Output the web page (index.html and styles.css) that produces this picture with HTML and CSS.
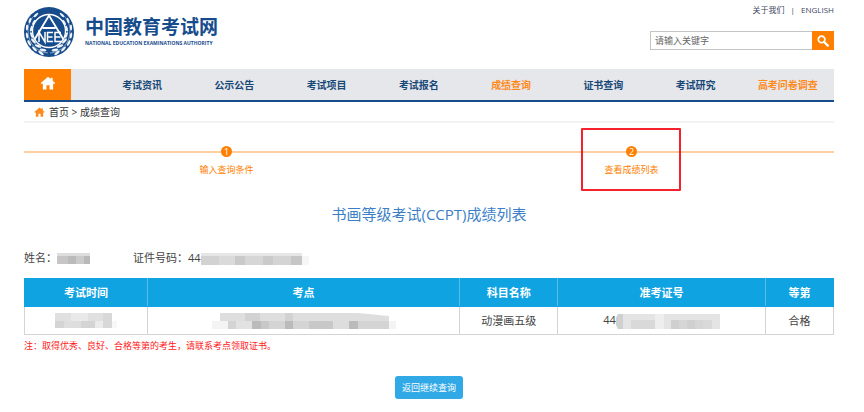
FILE: index.html
```html
<!DOCTYPE html>
<html lang="zh-CN">
<head>
<meta charset="utf-8">
<meta name="viewport" content="width=device-width, initial-scale=1">
<title>中国教育考试网 - 成绩查询</title>
<link rel="stylesheet" href="styles.css">
</head>
<body>
<svg class="defs" aria-hidden="true">
  <defs>
    <path id="house" d="M8 0.8 L0.3 7.6 L1.4 8.8 L2.5 7.9 V14.5 H6.4 V10 H9.6 V14.5 H13.5 V7.9 L14.6 8.8 L15.7 7.6 L13 5.2 V1.8 H10.8 V3.3 Z"/>
    <g id="branch">
      <path d="M24 46 C12 45 4 36 4 24 C4 17 7 11 12 7" fill="none" stroke="#cfdcec" stroke-width="0.6"/>
      <g fill="#eef3f9">
        <ellipse cx="19" cy="43" rx="3.4" ry="1.3" transform="rotate(8 19 43)"/>
        <ellipse cx="17" cy="46" rx="3.2" ry="1.2" transform="rotate(38 17 46)"/>
        <ellipse cx="14" cy="39" rx="3.4" ry="1.3" transform="rotate(20 14 39)"/>
        <ellipse cx="10.5" cy="42" rx="3.2" ry="1.2" transform="rotate(48 10.5 42)"/>
        <ellipse cx="9.5" cy="34" rx="3.2" ry="1.3" transform="rotate(50 9.5 34)"/>
        <ellipse cx="5.2" cy="36" rx="3.2" ry="1.2" transform="rotate(62 5.2 36)"/>
        <ellipse cx="7.6" cy="28" rx="3.1" ry="1.2" transform="rotate(72 7.6 28)"/>
        <ellipse cx="3" cy="28.5" rx="3.1" ry="1.1" transform="rotate(80 3 28.5)"/>
        <ellipse cx="7.4" cy="21.5" rx="3.1" ry="1.2" transform="rotate(105 7.4 21.5)"/>
        <ellipse cx="3" cy="20.5" rx="3" ry="1.1" transform="rotate(92 3 20.5)"/>
        <ellipse cx="10" cy="15.5" rx="3" ry="1.2" transform="rotate(122 10 15.5)"/>
        <ellipse cx="6" cy="13.5" rx="3" ry="1.1" transform="rotate(110 6 13.5)"/>
        <ellipse cx="12" cy="8" rx="3" ry="1.1" transform="rotate(135 12 8)"/>
      </g>
    </g>
  </defs>
</svg>

<div class="page">
  <header class="header">
    <a class="brand" href="#">
      <svg class="emblem" viewBox="0 0 50 50" role="img" aria-label="NEEA">
        <circle cx="25" cy="25" r="25" fill="#174c8c"/>
        <use href="#branch"/>
        <use href="#branch" transform="translate(50 0) scale(-1 1)"/>
        <circle cx="25" cy="24" r="16.5" fill="#174c8c" stroke="#fff" stroke-width="1.3"/>
        <path d="M10.5 32.5 L25 8.5 L39.5 32.5 M18.5 21 H31.5" fill="none" stroke="#fff" stroke-width="1.8"/>
        <path d="M15 35 V25 L21 35 V25 M29 25.6 H23.5 V34.4 H29 M23.5 30 H28.5 M37 25.6 H31 V34.4 H38 M31 30 H36.5" fill="none" stroke="#fff" stroke-width="1.5"/>
      </svg>
      <span class="brand-text">
        <span class="brand-name">中国教育考试网</span>
        <span class="brand-sub">NATIONAL EDUCATION EXAMINATIONS AUTHORITY</span>
      </span>
    </a>
    <div class="tools">
      <div class="links"><a href="#">关于我们</a><span>|</span><a href="#">ENGLISH</a></div>
      <form class="search">
        <input type="text" aria-label="关键字" placeholder="请输入关键字">
        <button type="button" aria-label="搜索">
          <svg viewBox="0 0 12 12" aria-hidden="true"><circle cx="4.6" cy="4.4" r="3.3" fill="none" stroke="#fff" stroke-width="1.7"/><path d="M7.2 7 L10.8 10.6" stroke="#fff" stroke-width="2.3" stroke-linecap="round"/></svg>
        </button>
      </form>
    </div>
  </header>

  <nav class="nav">
    <a class="home" href="#" aria-label="首页"><svg viewBox="0 0 16 15" aria-hidden="true"><use href="#house"/></svg></a>
    <div class="menu">
      <a href="#">考试资讯</a>
      <a href="#">公示公告</a>
      <a href="#">考试项目</a>
      <a href="#">考试报名</a>
      <a class="hot" href="#">成绩查询</a>
      <a href="#">证书查询</a>
      <a href="#">考试研究</a>
      <a class="hot" href="#">高考问卷调查</a>
    </div>
  </nav>

  <div class="crumbs">
    <svg viewBox="0 0 16 15" aria-hidden="true"><use href="#house"/></svg>
    <span><a href="#">首页</a> &gt; <a href="#">成绩查询</a></span>
  </div>

  <main>
    <ol class="steps">
      <li><span class="num">1</span><span>输入查询条件</span></li>
      <li class="marked"><span class="num">2</span><span>查看成绩列表</span></li>
    </ol>

    <h1>书画等级考试(CCPT)成绩列表</h1>

    <div class="person">
      <div class="who">姓名：<svg class="mask mask-name" viewBox="0 0 33 12" aria-hidden="true">
        <path fill="#dedede" d="M0 1H33V4H0z"/><path fill="#c6c6c6" d="M0 4H11V12H0z"/><path fill="#bbb" d="M11 4H19V12H11z"/><path fill="#cbcbcb" d="M19 4H27V12H19z"/><path fill="#b9b9b9" d="M27 4H33V12H27z"/></svg></div>
      <div class="who">证件号码：44<svg class="mask mask-id" viewBox="0 0 108 13" aria-hidden="true">
        <path fill="#e6e6e6" d="M0 1H101V4H0z"/><path fill="#d2d2d2" d="M0 4H18V13H0z"/><path fill="#dadada" d="M18 4H34V13H18z"/><path fill="#c9c9c9" d="M34 4H44V13H34z"/><path fill="#d6d6d6" d="M44 4H62V13H44z"/><path fill="#cacaca" d="M62 4H72V13H62z"/><path fill="#d4d4d4" d="M72 4H90V13H72z"/><path fill="#c6c6c6" d="M90 4H101V13H90z"/><path fill="#f6f6f6" d="M101 4H108V13H101z"/></svg></div>
    </div>

    <table>
      <colgroup><col class="c-time"><col class="c-site"><col class="c-subject"><col class="c-ticket"><col class="c-grade"></colgroup>
      <thead>
        <tr><th scope="col">考试时间</th><th scope="col">考点</th><th scope="col">科目名称</th><th scope="col">准考证号</th><th scope="col">等第</th></tr>
      </thead>
      <tbody>
        <tr>
          <td><svg class="mask mask-time" viewBox="0 0 62 16" aria-hidden="true">
            <path fill="#e0e0e0" d="M0 0H57V8H0z"/><path fill="#e9e9e9" d="M16 0H33V8H16z"/><path fill="#d4d4d4" d="M0 8H9V15H0zM26 8H40V15H26z"/><path fill="#dedede" d="M9 8H26V15H9z"/><path fill="#ebebeb" d="M40 8H48V15H40z"/><path fill="#d8d8d8" d="M48 0H57V15H48z"/><path fill="#f8f8f8" d="M57 8H62V15H57z"/></svg></td>
          <td><svg class="mask mask-site" viewBox="0 0 184 16" aria-hidden="true">
            <path fill="#dedede" d="M8 0H146L177 3V8H8z"/><path fill="#d2d2d2" d="M33 0H48V8H33zM73 0H81V8H73z"/><path fill="#f4f4f4" d="M0 8H16V16H0zM177 8H184V16H177z"/><path fill="#d4d4d4" d="M16 8H177V16H16z"/><path fill="#e2e2e2" d="M24 8H40V16H24z"/><path fill="#bbb" d="M40 8H49V16H40zM73 8H81V16H73zM137 8H146V16H137z"/><path fill="#c8c8c8" d="M49 8H57V16H49zM97 8H121V16H97z"/><path fill="#ddd" d="M121 8H137V16H121z"/></svg></td>
          <td>动漫画五级</td>
          <td>44<svg class="mask mask-ticket" viewBox="0 0 104 15" aria-hidden="true">
            <path fill="#e4e4e4" d="M2 0H104V15H2L0 11V4z"/><path fill="#d0d0d0" d="M2 0H7V15H2L0 11V4z"/><path fill="#d9d9d9" d="M15 6H39V15H15zM87 6H96V15H87z"/><path fill="#eee" d="M39 0H48V15H39z"/><path fill="#cfcfcf" d="M55 6H63V15H55zM71 6H79V15H71z"/><path fill="#d6d6d6" d="M63 6H71V15H63zM79 6H87V15H79z"/></svg></td>
          <td>合格</td>
        </tr>
      </tbody>
    </table>
    <p class="note">注：取得优秀、良好、合格等第的考生，请联系考点领取证书。</p>
    <div class="actions"><button type="button">返回继续查询</button></div>
  </main>
</div>
</body>
</html>
```

FILE: styles.css
```css
*, *::before, *::after { box-sizing: border-box; }

body {
  margin: 0;
  background: #fff;
  color: #444;
  font-family: "Open Sans", "Noto Sans CJK SC", sans-serif;
  font-size: 11px;
  line-height: 16px;
}

a { color: inherit; text-decoration: none; }
svg { display: block; }
.defs { position: absolute; width: 0; height: 0; }
.page { padding: 0 30px 0 24px; }

.header {
  display: flex;
  justify-content: space-between;
  height: 69px;
  padding-top: 4px;
}
.brand { display: flex; gap: 11px; padding-top: 3px; color: #174c8c; }
.emblem { width: 50px; height: 50px; }
.brand-text { display: flex; flex-direction: column; padding-top: 8px; }
.brand-name { font-size: 19px; line-height: 24px; font-weight: 700; }
.brand-sub {
  font-size: 5px;
  line-height: 8px;
  font-weight: 700;
  white-space: nowrap;
}

.tools { display: flex; flex-direction: column; align-items: flex-end; gap: 15px; }
.links { display: flex; gap: 6px; font-size: 8px; line-height: 12px; color: #3d4663; }
.search { display: flex; height: 19px; }
.search input {
  width: 162px;
  padding: 0 4px;
  border: 1px solid #c4c4c4;
  border-right: 0;
  border-radius: 0;
  background: #fff;
  color: #555;
  font: inherit;
  font-size: 9px;
  outline: 0;
}
.search input::placeholder { color: #666; opacity: 1; }
.search button {
  display: grid;
  place-items: center;
  width: 22px;
  padding: 0;
  border: 0;
  background: #ff8000;
}
.search svg { width: 12px; height: 12px; }

.nav {
  display: flex;
  height: 33px;
  border-bottom: 2px solid #174c8c;
  background: #e6e7ea;
}
.home { display: grid; place-items: center; width: 47px; padding-bottom: 4px; background: #ff8000; }
.home svg { width: 16px; height: 14px; fill: #fff; }
.menu {
  display: grid;
  flex: 1;
  grid-template-columns: repeat(8, 1fr);
  align-items: center;
  margin-left: 25px;
  color: #174878;
  font-size: 10px;
  font-weight: 700;
  text-align: center;
}
.menu .hot { color: #ff8a1c; }

.crumbs {
  display: flex;
  align-items: center;
  gap: 4px;
  height: 21px;
  padding-left: 10px;
  border-bottom: 2px solid #f2f2f2;
  color: #333;
  font-size: 10px;
}
.crumbs svg { width: 11px; height: 10px; fill: #ff8a1c; }

.steps {
  display: grid;
  grid-template-columns: 1fr 1fr;
  margin: 0;
  padding: 23px 0 0;
  list-style: none;
  color: #ff8000;
  font-size: 9px;
}
.steps li {
  position: relative;
  display: flex;
  flex-direction: column;
  align-items: center;
  gap: 5px;
}
.steps li::before {
  content: "";
  position: absolute;
  top: 5px;
  left: 0;
  right: 0;
  height: 2px;
  background: #ffcf9f;
}
.num {
  position: relative;
  width: 11px;
  height: 11px;
  border-radius: 50%;
  background: #ff8000;
  color: #fff;
  font-size: 9px;
  line-height: 11px;
  text-align: center;
}
.marked::after {
  content: "";
  position: absolute;
  top: -18px;
  left: 50%;
  width: 100px;
  height: 63px;
  margin-left: -51px;
  border: 2px solid #f5222d;
  border-radius: 1px;
}

h1 {
  margin: 26px 0 0;
  color: #3c7fc6;
  font-size: 15px;
  line-height: 20px;
  font-weight: 400;
  text-align: center;
}

.person {
  display: flex;
  gap: 43px;
  margin-top: 26px;
  font-family: "Open Sans", "Noto Sans CJK TC", sans-serif;
}
.who { display: flex; align-items: center; }
.mask { flex: none; }
.mask-name { width: 33px; height: 12px; }
.mask-id { width: 108px; height: 13px; }
.mask-time { width: 62px; height: 16px; }
.mask-site { width: 184px; height: 16px; }
.mask-ticket { width: 104px; height: 15px; }
td .mask { display: inline-block; vertical-align: middle; }

table {
  width: 100%;
  margin-top: 12px;
  border-collapse: collapse;
  table-layout: fixed;
}
.c-time { width: 15.2%; }
.c-site { width: 38.6%; }
.c-subject { width: 12.1%; }
.c-ticket { width: 25.7%; }
.c-grade { width: 8.4%; }
th, td {
  height: 28px;
  padding: 0;
  border: 1px solid #d4d4d4;
  text-align: center;
}
th {
  border-color: #0fa3e2 #58bce8 #0fa3e2 #58bce8;
  background: #0fa3e2;
  color: #fff;
  font-weight: 700;
}
th:first-child { border-left-color: #0fa3e2; }
th:last-child { border-right-color: #0fa3e2; }

.note { margin: 3px 0 0; color: #ff1a1a; font-size: 9px; }
.actions { display: flex; justify-content: center; margin-top: 22px; }
.actions button {
  width: 68px;
  height: 23px;
  padding: 0;
  border: 0;
  border-radius: 3px;
  background: #30a9e6;
  color: #fff;
  font: inherit;
  font-size: 9px;
}
```
